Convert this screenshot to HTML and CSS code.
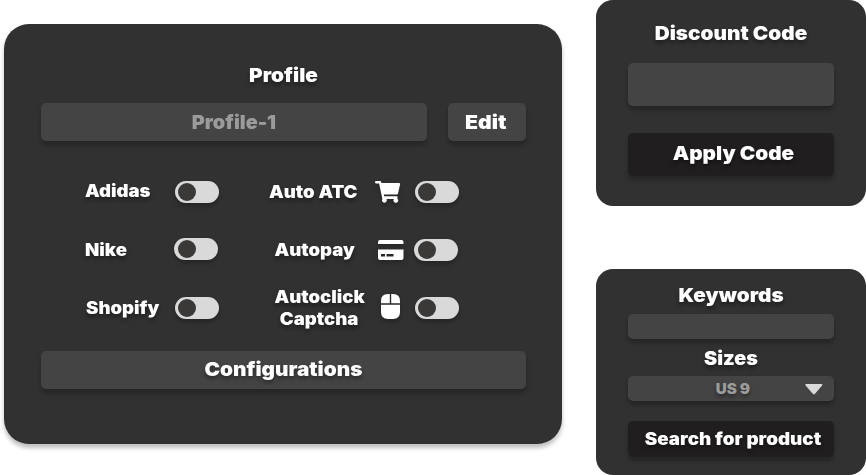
FILE: index.html
```html
<!DOCTYPE html>
<html lang="en">
<head>
<meta charset="utf-8">
<title>Profile</title>
<link rel="stylesheet" href="styles.css">
</head>
<body>
<main class="app">
  <section class="card profile">
    <h2 class="title t-profile">Profile</h2>
    <div class="profile-row">
      <div class="field name"><span class="t-name">Profile-1</span></div>
      <button class="field edit"><span class="t-edit">Edit</span></button>
    </div>
    <div class="options">
      <div class="option r1">
        <span class="label t-adidas">Adidas</span><i class="toggle"></i>
      </div>
      <div class="option r1 right">
        <span class="label t-atc">Auto ATC</span>
        <svg class="icon" width="26" height="23" viewBox="0 0 26 23"><path d="M1 0H5Q6 0 6.2 1L6.4 2H24Q25.4 2 25.1 3.3L23 12.4Q22.8 13.4 21.7 13.4H8.8L9.1 15.2H21.6Q22.8 15.2 22.6 16.3L22.3 17.7A2.3 2.3 0 1 1 19 18H11.5A2.4 2.4 0 1 1 7.4 17.9L4.1 2.4H1Q0 2.4 0 1.3Q0 0 1 0Z"/></svg>
        <i class="toggle"></i>
      </div>
      <div class="option r2">
        <span class="label t-nike">Nike</span><i class="toggle shifted raised"></i>
      </div>
      <div class="option r2 right">
        <span class="label t-pay">Autopay</span>
        <svg class="icon" width="26" height="20" viewBox="0 0 26 20"><path fill-rule="evenodd" d="M2 0H23.5Q25.5 0 25.5 2V4H0V2Q0 0 2 0ZM0 9.5H25.5V18Q25.5 20 23.5 20H2Q0 20 0 18ZM3 14V16.5H7V14ZM8.5 14V16.5H15.5V14Z"/></svg>
        <i class="toggle shifted"></i>
      </div>
      <div class="option r3">
        <span class="label t-shopify">Shopify</span><i class="toggle"></i>
      </div>
      <div class="option r3 right">
        <span class="label two"><span class="t-click">Autoclick</span><span class="t-captcha">Captcha</span></span>
        <svg class="icon" width="19" height="25" viewBox="0 0 19 25"><path d="M8.8 0V9.2H0V7Q0 0 7 0ZM10.2 0H12Q19 0 19 7V9.2H10.2ZM0 10.7H19V18Q19 25 12 25H7Q0 25 0 18Z"/></svg>
        <i class="toggle"></i>
      </div>
    </div>
    <button class="field config"><span class="t-config">Configurations</span></button>
  </section>
  <div class="side">
    <section class="card discount">
      <h2 class="title t-discount">Discount Code</h2>
      <div class="field code"></div>
      <button class="field dark apply"><span class="t-apply">Apply Code</span></button>
    </section>
    <section class="card search">
      <h2 class="title t-keywords">Keywords</h2>
      <div class="field slim"></div>
      <h2 class="title t-sizes">Sizes</h2>
      <div class="field slim select"><span class="t-us">US 9</span>
        <svg class="arrow" width="18" height="11" viewBox="0 0 18 11"><path d="M1.2 0H16.5Q18 .2 17.1 1.5L10 9.7Q8.9 10.8 7.8 9.7L.6 1.5Q-.3.2 1.2 0Z"/></svg>
      </div>
      <button class="field dark find"><span class="t-find">Search for product</span></button>
    </section>
  </div>
</main>
</body>
</html>
```
FILE: styles.css
```css
* { box-sizing: border-box; }
body { margin: 0; background: #fff; font-family: Inter, "Open Sans", sans-serif; font-weight: 900; color: #fff; }
.app { display: flex; align-items: flex-start; width: 866px; height: 475px; overflow: hidden; }
.card { background: #313131; }
.profile { width: 558px; height: 420px; margin: 24px 0 0 4px; padding: 39px 36px 0 37px; border-radius: 25px; box-shadow: 0 4px 4px rgba(0,0,0,.25); }
.title { margin: 0; font-size: 19.3px; line-height: 24px; font-weight: 900; text-align: center; text-shadow: 0 3px 4px rgba(0,0,0,.4); white-space: nowrap; }
.field { display: flex; align-items: center; justify-content: center; margin: 0; padding: 0; border: 0; border-radius: 5px; background: #444; color: #fff; font: 900 19.3px/24px Inter, "Open Sans", sans-serif; box-shadow: 0 4px 4px rgba(0,0,0,.25); white-space: nowrap; }
button.field { text-shadow: 0 3px 4px rgba(0,0,0,.4); }
.title, .field span { transform: scaleX(1.075); }
.profile-row { display: flex; gap: 21px; margin-top: 16px; }
.name { width: 386px; height: 38px; color: #9b9b9b; }
.edit { width: 78px; height: 38px; padding-right: 2px; }
.field .t-name { transform: scaleX(1.03); }
.field .t-edit { transform: scaleX(1.1); text-shadow: none; }
.field .t-find { transform: scaleX(1.09); }
.field .t-us { transform: translateX(1.5px) scaleX(1.05); }
.t-sizes { transform: scaleX(1.03); }
.options { display: grid; grid-template-columns: 184px 192px; grid-template-rows: 58px 58px 58px; margin: 22px 0 0 44px; }
.option { display: flex; align-items: center; height: 58px; }
.label { width: 90px; font-size: 17.3px; line-height: 22px; white-space: nowrap; text-shadow: 0 3px 4px rgba(0,0,0,.4); transform: scaleX(1.075); transform-origin: left; }
.t-adidas { margin-top: -2px; }
.t-shopify { padding-left: 1px; }
.right .label { width: 106px; }
.right .t-pay { padding-left: 5px; }
.two { display: flex; flex-direction: column; padding-left: 5px; }
.two .t-captcha { padding-left: 5px; }
.icon { flex: none; fill: #fff; margin-right: 14px; filter: drop-shadow(0 3px 2px rgba(0,0,0,.25)); }
.r2 .icon { margin: 0 11px 0 3px; }
.r3 .icon { margin: 0 15px 3px 6px; }
.toggle { flex: none; width: 44px; height: 22px; padding: 2px 3px; border-radius: 11px; background: #d9d9d9; box-shadow: 0 3px 4px rgba(0,0,0,.25); }
.toggle::before { content: ""; display: block; width: 18px; height: 18px; border-radius: 50%; background: #3a3937; }
.toggle.shifted { margin-left: -1px; padding-left: 4px; }
.toggle.raised { margin-bottom: 2px; }
.config { width: 485px; height: 38px; margin-top: 14px; }
.config .t-config { margin-bottom: 2px; }
.side { width: 270px; margin-left: 34px; }
.side .card { height: 206px; padding: 0 32px; border-radius: 17px; }
.side .discount { padding-top: 21px; }
.code { height: 43px; margin-top: 18px; }
.apply { width: 206px; height: 43px; margin-top: 27px; padding: 0 0 3px 4px; }
.dark { background: #211e20; }
.side .search { margin-top: 63px; padding-top: 14px; }
.slim { height: 25px; margin: 7px 0; }
.select { position: relative; font-size: 14.5px; color: #9b9b9b; text-shadow: 0 3px 4px rgba(0,0,0,.4); margin-top: 6px; }
.arrow { position: absolute; right: 11px; top: 8px; fill: #d9d9d9; }
.find { width: 206px; height: 36px; margin-top: 20px; padding-left: 3px; font-size: 17.3px; }
```
